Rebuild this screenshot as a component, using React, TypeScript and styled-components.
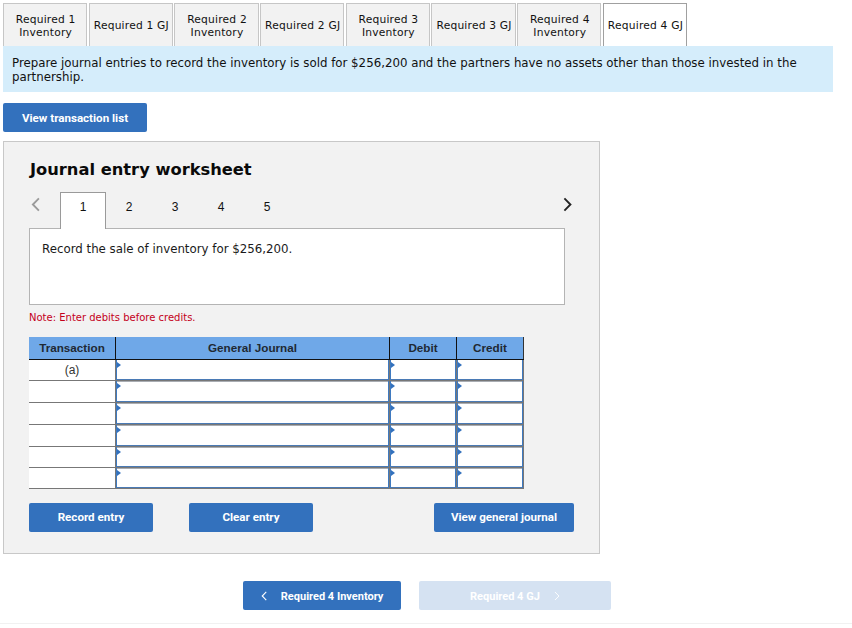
import React from "react";
import styled, { createGlobalStyle } from "styled-components";

const Global = createGlobalStyle`
  html, body { margin: 0; padding: 0; background: #fff; }
  body { font-family: "DejaVu Sans", Verdana, sans-serif; color: #111; }
  * { box-sizing: border-box; }
`;

const Page = styled.div`
  width: 852px;
  height: 628px;
  padding: 3px 0 0 3px;
  overflow: hidden;
  position: relative;
`;

const Tabs = styled.div`
  display: flex;
  gap: 1.4px;
  height: 43px;
`;

const Tab = styled.div<{ $active?: boolean }>`
  width: 84.3px;
  height: 43px;
  padding: 1px 0 0 1px;
  display: flex;
  align-items: center;
  justify-content: center;
  text-align: center;
  font-size: 10.7px;
  letter-spacing: 0.2px;
  line-height: 13px;
  white-space: nowrap;
  background: ${(p) => (p.$active ? "#fff" : "#f2f2f2")};
  border: 1px solid ${(p) => (p.$active ? "#a0a0a0" : "#c6c6c6")};
  border-bottom: none;
`;

const Info = styled.div`
  width: 830px;
  height: 46px;
  padding: 10px 9px 0;
  background: #d5edfb;
  font-size: 11.8px;
  line-height: 14px;
`;

const Button = styled.div<{ $w: number; $disabled?: boolean; $small?: boolean; $raised?: boolean }>`
  width: ${(p) => p.$w}px;
  height: 29px;
  padding: ${(p) => (p.$raised ? "0 0 1px" : "1px 0 0")};
  border-radius: 2px;
  display: flex;
  align-items: center;
  justify-content: center;
  gap: 14px;
  font-family: Roboto, "Liberation Sans", sans-serif;
  font-weight: 700;
  font-size: ${(p) => (p.$small ? 11 : 11.6)}px;
  color: #fff;
  background: ${(p) => (p.$disabled ? "#d5e2f2" : "#3371bd")};
  svg { flex: none; }
`;

const TopAction = styled.div`
  margin-top: 11px;
`;

const Panel = styled.div`
  margin-top: 9px;
  width: 597px;
  height: 413px;
  background: #f2f2f2;
  border: 1px solid #c8c8c8;
  padding: 17px 25px 0;
`;

const Title = styled.h2`
  margin: 0;
  height: 22px;
  padding-left: 1px;
  font-size: 16.3px;
  line-height: 22px;
  font-weight: 700;
  color: #0a0a0a;
`;

const Pager = styled.div`
  margin-top: 11px;
  height: 36px;
  display: flex;
  align-items: flex-start;
`;

const PrevArrow = styled.div`
  width: 31px;
  height: 26px;
  padding: 5px 0 0 2px;
`;

const NextArrow = styled.div`
  margin-left: auto;
  margin-right: -3px;
  width: 14px;
  height: 26px;
  padding-top: 5px;
`;

const PageNum = styled.div<{ $active?: boolean }>`
  width: 46px;
  height: ${(p) => (p.$active ? 37 : 30)}px;
  display: flex;
  align-items: center;
  justify-content: center;
  font-family: "Liberation Sans", Arial, sans-serif;
  font-size: 12px;
  padding-bottom: ${(p) => (p.$active ? 8 : 1)}px;
  color: #111;
  position: relative;
  z-index: 1;
  ${(p) => (p.$active ? "background:#fff;border:1px solid #9a9a9a;border-bottom:none;" : "")}
`;

const Prompt = styled.div`
  width: 536px;
  height: 77px;
  background: #fff;
  border: 1px solid #b4b4b4;
  padding: 13px 12px 0;
  font-size: 11.8px;
  line-height: 15px;
  color: #1a1a1a;
`;

const Note = styled.div`
  margin-top: 6px;
  height: 13px;
  font-size: 10px;
  line-height: 13px;
  color: #c4001a;
`;

const Journal = styled.div`
  margin-top: 13px;
  width: 495px;
  font-family: "Liberation Sans", Arial, sans-serif;
`;

const COLS = "87px 274px 67px 67px";

const HeadRow = styled.div`
  display: grid;
  grid-template-columns: ${COLS};
  height: 23px;
  background: #6fa8e8;
  border-bottom: 1px solid #111;
`;

const HeadCell = styled.div`
  display: flex;
  align-items: center;
  justify-content: center;
  padding-bottom: 1px;
  font-size: 11.7px;
  font-weight: 700;
  color: #1f2933;
  border-right: 1px solid #111;
  &:last-child { border-right: 1px solid #333; }
`;

const Row = styled.div<{ $h: number }>`
  display: grid;
  grid-template-columns: ${COLS};
  height: ${(p) => p.$h}px;
`;

const TxCell = styled.div`
  background: #fff;
  border-bottom: 1px solid #777;
  border-right: 1px solid #777;
  display: flex;
  justify-content: center;
  padding-top: 3px;
  font-size: 12px;
  line-height: 14px;
  color: #333;
`;

const InputCell = styled.div<{ $capped?: boolean }>`
  background: #fff;
  position: relative;
  border-right: 1px solid #777;
  border-bottom: 1px solid #777;
  box-shadow: inset 1px 0 0 #3f7ac0, inset -1px 0 0 #3f7ac0, inset 0 -1px 0 #4a7ab5
    ${(p) => (p.$capped ? ", inset 0 1px 0 #a9adb3" : "")};
  &::before {
    content: "";
    position: absolute;
    left: 1px;
    top: 2px;
    border-left: 4px solid #3371bd;
    border-top: 3px solid transparent;
    border-bottom: 3px solid transparent;
  }
`;

const Actions = styled.div`
  margin-top: 14px;
  width: 545px;
  display: flex;
`;

const BottomNav = styled.div`
  margin-top: 27px;
  margin-left: 240px;
  display: flex;
  gap: 18px;
`;

const Footer = styled.div`
  position: absolute;
  left: 0;
  right: 0;
  top: 623px;
  height: 1px;
  background: #f1f1f1;
`;

const Spacer = styled.div<{ $w: number }>`
  width: ${(p) => p.$w}px;
`;

const Chevron = ({ dir, color, size, sw }: { dir: "l" | "r"; color: string; size: number; sw: number }) => (
  <svg width={size * 0.62} height={size} viewBox="0 0 10 16" fill="none" stroke={color} strokeWidth={sw}>
    <path d={dir === "l" ? "M8.5 1.5 L2 8 L8.5 14.5" : "M1.5 1.5 L8 8 L1.5 14.5"} />
  </svg>
);

const tabs = [
  "Required 1\nInventory",
  "Required 1 GJ",
  "Required 2\nInventory",
  "Required 2 GJ",
  "Required 3\nInventory",
  "Required 3 GJ",
  "Required 4\nInventory",
  "Required 4 GJ",
];

const rowHeights = [21, 22, 22, 22, 21, 21];

export default function App() {
  return (
    <Page>
      <Global />
      <Tabs>
        {tabs.map((t, i) => (
          <Tab key={t} $active={i === 7}>
            <span>
              {t.split("\n").map((l) => (
                <div key={l}>{l}</div>
              ))}
            </span>
          </Tab>
        ))}
      </Tabs>
      <Info>
        Prepare journal entries to record the inventory is sold for $256,200 and the partners have no assets other than those invested in the partnership.
      </Info>
      <TopAction>
        <Button $w={144}>View transaction list</Button>
      </TopAction>
      <Panel>
        <Title>Journal entry worksheet</Title>
        <Pager>
          <PrevArrow>
            <Chevron dir="l" color="#9a9a9a" size={15} sw={2} />
          </PrevArrow>
          <PageNum $active>1</PageNum>
          <PageNum>2</PageNum>
          <PageNum>3</PageNum>
          <PageNum>4</PageNum>
          <PageNum>5</PageNum>
          <NextArrow>
            <Chevron dir="r" color="#222" size={15} sw={2} />
          </NextArrow>
        </Pager>
        <Prompt>Record the sale of inventory for $256,200.</Prompt>
        <Note>Note: Enter debits before credits.</Note>
        <Journal>
          <HeadRow>
            <HeadCell>Transaction</HeadCell>
            <HeadCell>General Journal</HeadCell>
            <HeadCell>Debit</HeadCell>
            <HeadCell>Credit</HeadCell>
          </HeadRow>
          {rowHeights.map((h, i) => (
            <Row key={i} $h={h}>
              <TxCell>{i === 0 ? "(a)" : ""}</TxCell>
              <InputCell $capped={i > 0} />
              <InputCell $capped={i > 0} />
              <InputCell $capped={i > 0} />
            </Row>
          ))}
        </Journal>
        <Actions>
          <Button $w={124} $raised>Record entry</Button>
          <Spacer $w={36} />
          <Button $w={124} $raised>Clear entry</Button>
          <Spacer $w={121} />
          <Button $w={140} $raised>View general journal</Button>
        </Actions>
      </Panel>
      <BottomNav>
        <Button $w={158} $small>
          <Chevron dir="l" color="#fff" size={10} sw={1.8} />
          Required 4 Inventory
        </Button>
        <Button $w={192} $disabled $small>
          Required 4 GJ
          <Chevron dir="r" color="#fff" size={10} sw={1.5} />
        </Button>
      </BottomNav>
      <Footer />
    </Page>
  );
}
